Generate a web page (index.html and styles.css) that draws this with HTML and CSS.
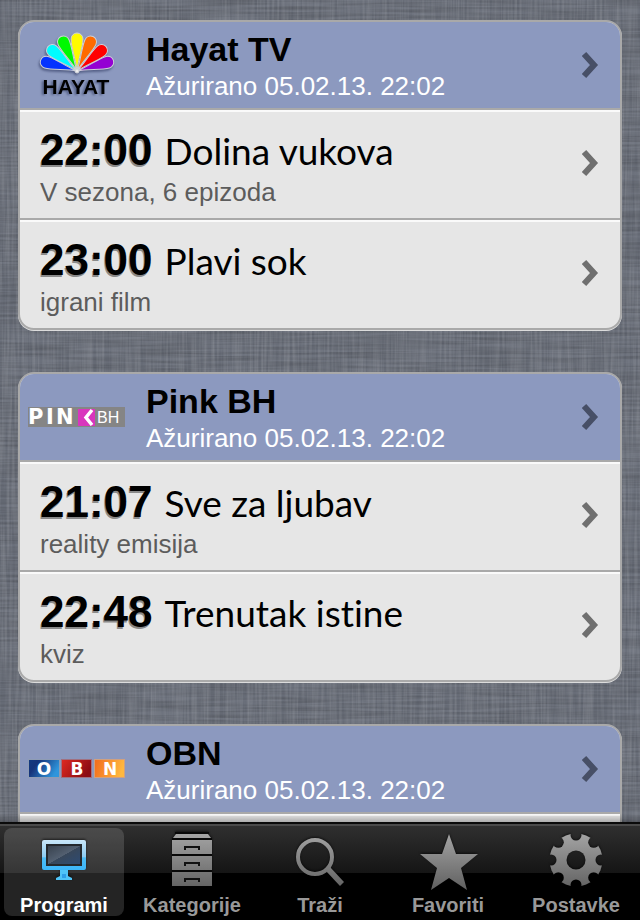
FILE: index.html
```html
<!DOCTYPE html>
<html lang="bs">
<head>
<meta charset="utf-8">
<meta name="viewport" content="width=device-width, initial-scale=1">
<title>Programi</title>
<link rel="stylesheet" href="styles.css">
</head>
<body>
<svg class="linen" aria-hidden="true">
  <filter id="weft" x="0" y="0" width="100%" height="100%"><feTurbulence type="fractalNoise" baseFrequency="0.015 0.4" numOctaves="2" seed="4"/><feColorMatrix values="0 0 0 0 0  0 0 0 0 0  0 0 0 0 0  2 0 0 0 -0.6"/></filter>
  <filter id="warp" x="0" y="0" width="100%" height="100%"><feTurbulence type="fractalNoise" baseFrequency="0.4 0.015" numOctaves="2" seed="9"/><feColorMatrix values="0 0 0 0 1  0 0 0 0 1  0 0 0 0 1  2 0 0 0 -0.6"/></filter>
  <rect class="weft" width="100%" height="100%" filter="url(#weft)"/>
  <rect class="warp" width="100%" height="100%" filter="url(#warp)"/>
</svg>
<main class="channels">
  <section class="card">
    <a class="card-head" href="#">
      <svg class="logo" viewBox="28 30 98 72" aria-hidden="true">
        <defs><path id="petal" d="M0 0C-1 -11 -6 -24 -6 -32A6 6 0 0 1 6 -32C6 -24 1 -11 0 0Z"/></defs>
        <g class="petals" transform="translate(77 72)">
          <use href="#petal" fill="#0433ff" transform="rotate(-74)"/>
          <use href="#petal" fill="#9400d3" transform="rotate(74)"/>
          <use href="#petal" fill="#00fdff" transform="rotate(-50)"/>
          <use href="#petal" fill="#ff0000" transform="rotate(50)"/>
          <use href="#petal" fill="#00f900" transform="rotate(-25)"/>
          <use href="#petal" fill="#ff6a00" transform="rotate(25)"/>
          <use href="#petal" fill="#fffb00"/>
          <circle r="2" fill="#eee"/>
        </g>
        <text class="hayat" x="76" y="95">HAYAT</text>
      </svg>
      <span class="head-text"><strong class="name">Hayat TV</strong><span class="updated">Ažurirano 05.02.13. 22:02</span></span>
      <svg class="chevron" viewBox="0 0 18 28" aria-hidden="true"><path d="M3 3L13 14L3 25"/></svg>
    </a>
    <a class="show" href="#">
      <span class="show-text"><span class="line"><time class="time">22:00</time><span class="title">Dolina vukova</span></span><span class="note">V sezona, 6 epizoda</span></span>
      <svg class="chevron" viewBox="0 0 18 28" aria-hidden="true"><path d="M3 3L13 14L3 25"/></svg>
    </a>
    <a class="show" href="#">
      <span class="show-text"><span class="line"><time class="time">23:00</time><span class="title">Plavi sok</span></span><span class="note">igrani film</span></span>
      <svg class="chevron" viewBox="0 0 18 28" aria-hidden="true"><path d="M3 3L13 14L3 25"/></svg>
    </a>
  </section>

  <section class="card">
    <a class="card-head" href="#">
      <svg class="logo" viewBox="28 381 98 72" aria-hidden="true">
        <rect x="28" y="407" width="97" height="20" fill="#858585"/>
        <rect x="78" y="409" width="17" height="17" fill="#d936bd"/>
        <path d="M92 410L86 417.500L92 425" fill="none" stroke="#fff" stroke-width="3.500"/>
        <text class="pin" x="28 46 56" y="424">PIN</text>
        <text class="bh" x="97" y="423">BH</text>
      </svg>
      <span class="head-text"><strong class="name">Pink BH</strong><span class="updated">Ažurirano 05.02.13. 22:02</span></span>
      <svg class="chevron" viewBox="0 0 18 28" aria-hidden="true"><path d="M3 3L13 14L3 25"/></svg>
    </a>
    <a class="show" href="#">
      <span class="show-text"><span class="line"><time class="time">21:07</time><span class="title">Sve za ljubav</span></span><span class="note">reality emisija</span></span>
      <svg class="chevron" viewBox="0 0 18 28" aria-hidden="true"><path d="M3 3L13 14L3 25"/></svg>
    </a>
    <a class="show" href="#">
      <span class="show-text"><span class="line"><time class="time">22:48</time><span class="title">Trenutak istine</span></span><span class="note">kviz</span></span>
      <svg class="chevron" viewBox="0 0 18 28" aria-hidden="true"><path d="M3 3L13 14L3 25"/></svg>
    </a>
  </section>

  <section class="card">
    <a class="card-head" href="#">
      <svg class="logo" viewBox="28 733 98 72" aria-hidden="true">
        <defs>
          <linearGradient id="obnBlue" x2="1" y2="0.4"><stop offset="0" stop-color="#123a80"/><stop offset=".3" stop-color="#15337a"/><stop offset="1" stop-color="#2f95dc"/></linearGradient>
          <linearGradient id="obnRed" x2="1" y2="0.4"><stop offset="0" stop-color="#e02a22"/><stop offset="1" stop-color="#8c0c12"/></linearGradient>
          <linearGradient id="obnOrange" x2="1" y2="0.2"><stop offset="0" stop-color="#f26a1c"/><stop offset="1" stop-color="#ffb83e"/></linearGradient>
        </defs>
        <rect x="28.500" y="759.500" width="31" height="18" fill="url(#obnBlue)" stroke="#8e9cb4"/>
        <rect x="61.500" y="759.500" width="30" height="18" fill="url(#obnRed)" stroke="#a07080"/>
        <rect x="94.500" y="759.500" width="30" height="18" fill="url(#obnOrange)" stroke="#d0a080"/>
        <g class="obn"><text x="44" y="775">O</text><text x="77" y="775">B</text><text x="110" y="775">N</text></g>
      </svg>
      <span class="head-text"><strong class="name">OBN</strong><span class="updated">Ažurirano 05.02.13. 22:02</span></span>
      <svg class="chevron" viewBox="0 0 18 28" aria-hidden="true"><path d="M3 3L13 14L3 25"/></svg>
    </a>
    <div class="show"></div>
  </section>
</main>

<nav class="tabs">
  <svg class="defs" aria-hidden="true"><defs>
    <linearGradient id="steel" gradientUnits="userSpaceOnUse" x1="0" y1="0" x2="0" y2="60"><stop offset="0" stop-color="#a8a8a8"/><stop offset="1" stop-color="#606060"/></linearGradient>
    <linearGradient id="frame" x2="0" y2="1"><stop offset="0" stop-color="#c9e6f8"/><stop offset=".55" stop-color="#8dcdf3"/><stop offset=".6" stop-color="#4cbcf6"/><stop offset="1" stop-color="#3cb6fa"/></linearGradient>
    <linearGradient id="screen" x2="1" y2="1"><stop offset="0" stop-color="#38424e"/><stop offset=".5" stop-color="#536071"/><stop offset=".51" stop-color="#38475a"/><stop offset="1" stop-color="#2d4a72"/></linearGradient>
  </defs></svg>
  <a class="tab active" href="#" aria-current="page">
    <svg class="icon" viewBox="0 0 60 60" aria-hidden="true">
      <rect x="8" y="10" width="44" height="30" rx="2" fill="url(#frame)"/>
      <rect x="12" y="14" width="36" height="22" fill="#24282d"/>
      <rect x="14" y="16" width="32" height="18" fill="url(#screen)"/>
      <path d="M26 40h8v6l4 2v2H22v-2l4-2z" fill="#4fc4f8"/><path d="M28 44h4v4h-4z" fill="#2f9fe8"/>
    </svg>
    <span>Programi</span>
  </a>
  <a class="tab" href="#">
    <svg class="icon" viewBox="0 0 60 60" aria-hidden="true">
      <g fill="url(#steel)"><path d="M14 4h32l3 4H11z"/><path d="M10 10h40v14H10zM10 26h40v14H10zM10 42h40v14H10z"/></g>
      <path d="M13 3H47M10 9H50M10 25H50M10 41H50" stroke="#080808" stroke-width="2"/>
      <path d="M23 20v-3h14v3M23 36v-3h14v3M23 52v-3h14v3" fill="none" stroke="#111" stroke-width="2"/>
    </svg>
    <span>Kategorije</span>
  </a>
  <a class="tab" href="#">
    <svg class="icon" viewBox="0 0 60 60" aria-hidden="true">
      <circle cx="25" cy="27" r="17" fill="none" stroke="url(#steel)" stroke-width="4"/>
      <path d="M36 41L40 37L54 52L50 56Z" fill="url(#steel)"/>
    </svg>
    <span>Traži</span>
  </a>
  <a class="tab" href="#">
    <svg class="icon" viewBox="0 0 60 60" aria-hidden="true">
      <path d="M31 4L38 24H60L43 38L49 60L31 48L13 60L19 38L2 24H24Z" fill="url(#steel)"/>
    </svg>
    <span>Favoriti</span>
  </a>
  <a class="tab" href="#">
    <svg class="icon" viewBox="0 0 60 60" aria-hidden="true">
      <mask id="gearCut"><rect width="60" height="60" fill="#fff"/>
        <g fill="#000"><circle cx="30" cy="30" r="9.500"/>
        <circle cx="30" cy="5" r="5.500"/><circle cx="47.700" cy="12.300" r="5.500"/><circle cx="55" cy="30" r="5.500"/><circle cx="47.700" cy="47.700" r="5.500"/><circle cx="30" cy="55" r="5.500"/><circle cx="12.300" cy="47.700" r="5.500"/><circle cx="5" cy="30" r="5.500"/><circle cx="12.300" cy="12.300" r="5.500"/></g>
      </mask>
      <circle cx="30" cy="30" r="26.500" fill="url(#steel)" mask="url(#gearCut)"/>
    </svg>
    <span>Postavke</span>
  </a>
</nav>
</body>
</html>
```
FILE: styles.css
```css
* {
  box-sizing: border-box;
}

body {
  margin: 0;
  height: 100vh;
  display: flex;
  flex-direction: column;
  position: relative;
  overflow: hidden;
  background: #6b707b;
  font-family: "Liberation Sans", Arial, sans-serif;
  color: #000;
}

a {
  color: inherit;
  text-decoration: none;
}

/* Woven background */
.linen {
  position: absolute;
  inset: 0;
  width: 100%;
  height: 100%;
}

.weft {
  opacity: 0.16;
}

.warp {
  opacity: 0.12;
}

/* Channel list */
.channels {
  position: relative;
  flex: 1;
  min-height: 0;
  overflow: hidden;
  display: flex;
  flex-direction: column;
  gap: 42px;
  padding: 20px 18px 0;
}

.channels::after {
  content: "";
  position: absolute;
  inset: auto 0 0;
  height: 8px;
  background: linear-gradient(rgba(0, 0, 0, 0), rgba(0, 0, 0, 0.25));
}

.card {
  flex: none;
  border: 2px solid #a9a9a9;
  border-radius: 16px;
  background: #e6e6e6;
  overflow: hidden;
  box-shadow: 0 1px 0 #dcdcdc;
}

.card-head,
.show {
  display: flex;
  align-items: center;
  padding-right: 21px;
}

.card-head {
  gap: 20px;
  height: 88px;
  padding-left: 8px;
  background: #8c99bf;
  border-bottom: 2px solid #a9a9a9;
}

.logo {
  flex: none;
  width: 98px;
  height: 72px;
}

.head-text,
.show-text {
  flex: 1;
  min-width: 0;
  display: flex;
  flex-direction: column;
  white-space: nowrap;
}

.head-text {
  padding-top: 2px;
}

.show-text {
  padding: 10px 0 2px;
}

.name {
  font-size: 34px;
  line-height: 40px;
}

.updated {
  font-size: 26px;
  line-height: 34px;
  color: #fff;
}

.show {
  height: 108px;
  padding-left: 20px;
  padding-bottom: 2px;
  box-shadow: inset 0 2px 0 #fafafa;
}

.show + .show {
  height: 110px;
  border-top: 2px solid #a9a9a9;
}

.line {
  display: flex;
  align-items: baseline;
  gap: 12px;
  line-height: 48px;
}

.time {
  font-size: 44px;
  font-weight: bold;
  text-shadow: -1px 2px 0 #8a8a8a;
}

.title {
  font-family: Lato, sans-serif;
  font-size: 37px;
  font-variant-ligatures: none;
}

.note {
  font-size: 26px;
  line-height: 34px;
  color: #5c5c5c;
}

.chevron {
  flex: none;
  width: 18px;
  height: 28px;
  fill: none;
  stroke: #6f6f6f;
  stroke-width: 6;
}

.card-head .chevron {
  stroke: #474f66;
}

/* Logos */
.petals {
  stroke: #cfd2d8;
  stroke-width: 1;
  filter: drop-shadow(-1px 2px 1px rgba(30, 40, 80, 0.5));
}

.hayat {
  font-size: 21px;
  font-weight: bold;
  text-anchor: middle;
  filter: drop-shadow(-2px 1px 1px rgba(30, 40, 80, 0.5));
}

.pin,
.obn {
  font-family: "DejaVu Sans", sans-serif;
  font-weight: bold;
  fill: #fff;
}

.pin {
  font-size: 21px;
}

.bh {
  font-size: 16px;
  fill: #fff;
}

.obn {
  font-size: 17px;
  text-anchor: middle;
}

/* Tab bar */
.tabs {
  position: relative;
  flex: none;
  display: flex;
  gap: 8px;
  padding: 4px;
  border-top: 2px solid #0a0a0a;
  background: linear-gradient(#4a4a4a 0 2px, #2f2f2f 2px, #151515 49px, #000 49px);
}

.defs {
  position: absolute;
  width: 0;
  height: 0;
}

.tab {
  flex: 1;
  display: flex;
  flex-direction: column;
  align-items: center;
  height: 88px;
  border-radius: 8px;
  font-size: 20px;
  font-weight: bold;
  line-height: 30px;
  color: #999;
}

.tab.active {
  color: #fff;
  background: rgba(255, 255, 255, 0.14);
}

.icon {
  flex: none;
  width: 60px;
  height: 60px;
  margin-top: 2px;
  filter: drop-shadow(0 -1px 1px rgba(0, 0, 0, 0.6));
}
```
